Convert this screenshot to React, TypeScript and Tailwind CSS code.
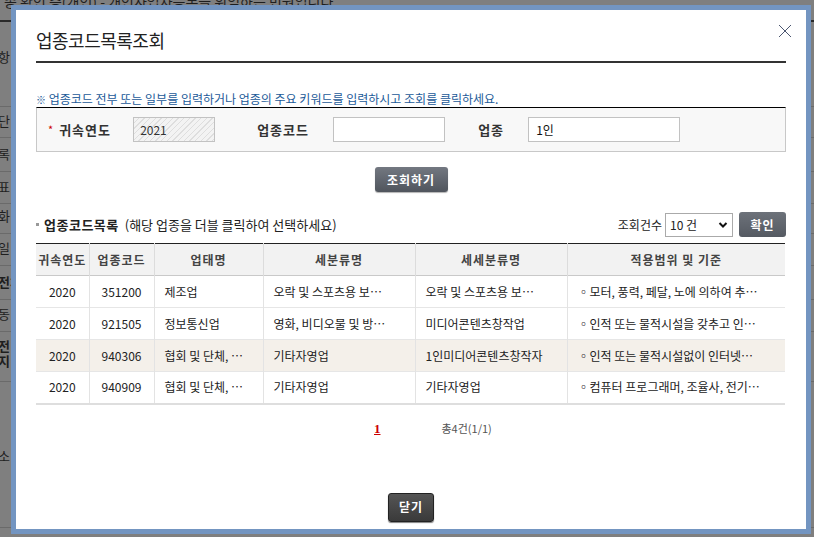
import React from "react";

const rows = [
  { year: "2020", code: "351200", biz: "제조업", sub: "오락 및 스포츠용 보…", subsub: "오락 및 스포츠용 보…", scope: "◦모터, 풍력, 페달, 노에 의하여 추…" },
  { year: "2020", code: "921505", biz: "정보통신업", sub: "영화, 비디오물 및 방…", subsub: "미디어콘텐츠창작업", scope: "◦인적 또는 물적시설을 갖추고 인…" },
  { year: "2020", code: "940306", biz: "협회 및 단체, …", sub: "기타자영업", subsub: "1인미디어콘텐츠창작자", scope: "◦인적 또는 물적시설없이 인터넷…", active: true },
  { year: "2020", code: "940909", biz: "협회 및 단체, …", sub: "기타자영업", subsub: "기타자영업", scope: "◦컴퓨터 프로그래머, 조율사, 전기…" },
];

const bgRows = [
  { h: "h-[76px]", t: "항", pt: "pt-[18px]" },
  { h: "h-[31px]", t: "단", pt: "pt-[6px]" },
  { h: "h-[34px]", t: "록", pt: "pt-[8px]" },
  { h: "h-[32px]", t: "표", pt: "pt-[7px]" },
  { h: "h-[30px]", t: "화", pt: "pt-[4px]" },
  { h: "h-[32px]", t: "일", pt: "pt-[6px]" },
  { h: "h-[34px]", t: "전체", pt: "pt-[8px]", bold: true },
  { h: "h-[32px]", t: "동", pt: "pt-[6px]" },
  { h: "h-[50px]", t: "전\n지", pt: "pt-[6px]", bold: true },
  { h: "h-[146px]", t: "소", pt: "pt-[66px]" },
];

function Btn({ children, className }: { children: React.ReactNode; className?: string }) {
  return (
    <button
      className={
        "flex items-center justify-center rounded-[3px] text-[12px] font-bold text-white tracking-[1px] " +
        (className ?? "")
      }
    >
      {children}
    </button>
  );
}

export default function App() {
  return (
    <div className="relative w-[814px] h-[537px] overflow-hidden bg-[#7f7f7f] font-['Noto_Sans_CJK_KR',sans-serif] text-[12px] text-[#333]">
      {/* dimmed page behind the dialog */}
      <div className="flex flex-col">
        <div className="h-[20px] -mt-[9px] pl-[4px] text-[14px] text-[#1e1e1e] whitespace-nowrap">
          종 확인 증(개인) - 개인사업자등록을 위임하는 민원입니다.
        </div>
        <div className="h-[11px] border-t-2 border-[#2a2a2a] mt-[9px]" />
        {bgRows.map((r, i) => (
          <div key={i} className={`${r.h} ${r.pt} border-b border-[#6a6a6a] -ml-[2px] text-[13px] leading-[15px] text-[#1e1e1e] whitespace-pre ${r.bold ? "font-bold" : ""}`}>
            {r.t}
          </div>
        ))}
      </div>

      {/* dialog */}
      <div className="absolute left-[11px] top-[5px] w-[800px] h-[529px] border-[5px] border-[#7395c1] bg-white">
        <div className="flex flex-col px-[20px] pt-[18px]">
          <div className="relative flex items-center h-[24px]">
            <h1 className="text-[18px] text-[#222] tracking-[-0.5px]">업종코드목록조회</h1>
            <svg className="absolute right-[-6px] top-[-4px]" width="14" height="14" viewBox="0 0 14 14">
              <path d="M1 1L13 13M13 1L1 13" stroke="#4b5670" strokeWidth="1" />
            </svg>
          </div>
          <div className="mt-[9px] h-[2px] bg-[#333]" />

          <p className="mt-[28px] text-[12px] leading-[15px] text-[#1b5a98] whitespace-nowrap">
            <span className="text-[10px]">※</span> 업종코드 전부 또는 일부를 입력하거나 업종의 주요 키워드를 입력하시고 조회를 클릭하세요.
          </p>

          <div className="flex items-center h-[45px] border border-[#c8c8c8] border-t-black bg-[#f8f8f8] pl-[11px]">
            <span className="text-[#c00] text-[11px] mr-[6px]">*</span>
            <span className="w-[74px] text-[13px] font-bold text-[#333] tracking-[1px]">귀속연도</span>
            <div className="w-[82px] h-[25px] border border-[#c2c2c2] flex items-center pl-[6px] text-[12px] text-[#333] bg-[repeating-linear-gradient(135deg,#f3f3f3_0px,#f3f3f3_3px,#dedede_3px,#dedede_4px)]">
              2021
            </div>
            <span className="ml-[42px] w-[76px] text-[13px] font-bold text-[#333] tracking-[1px]">업종코드</span>
            <div className="w-[112px] h-[25px] border border-[#c2c2c2] bg-white" />
            <span className="ml-[33px] w-[50px] text-[13px] font-bold text-[#333] tracking-[1px]">업종</span>
            <div className="w-[152px] h-[25px] border border-[#c2c2c2] bg-white flex items-center pl-[7px] text-[12px] text-[#111]">
              1인
            </div>
          </div>

          <div className="flex justify-center mt-[15px]">
            <Btn className="w-[73px] h-[25px] bg-gradient-to-b from-[#737881] to-[#50555d] shadow-[0_1px_1px_rgba(0,0,0,0.3)]">
              조회하기
            </Btn>
          </div>

          <div className="flex items-center justify-between mt-[20px] h-[25px]">
            <div className="flex items-center text-[13px] text-[#222] whitespace-nowrap">
              <span className="w-[3px] h-[3px] bg-[#999] mr-[5px]" />
              <span className="font-bold tracking-[0.5px]">업종코드목록</span>
              <span className="ml-[6px]">(해당 업종을 더블 클릭하여 선택하세요)</span>
            </div>
            <div className="flex items-center gap-[3px]">
              <span className="text-[12px] text-[#222]">조회건수</span>
              <div className="w-[68px] h-[24px] border border-[#aaa] bg-white flex items-center justify-between px-[4px] text-[12px] text-[#222]">
                <span>10 건</span>
                <svg width="10" height="8" viewBox="0 0 10 8">
                  <path d="M1.5 2L5 5.5L8.5 2" stroke="#111" strokeWidth="2" fill="none" />
                </svg>
              </div>
              <Btn className="ml-[3px] w-[47px] h-[25px] bg-gradient-to-b from-[#6d727a] to-[#555a62]">확인</Btn>
            </div>
          </div>

          <table className="mt-[6px] w-[749px] table-fixed border-collapse border-t border-t-[#222] border-b-2 border-b-[#dedede] text-[12px]">
            <colgroup>
              <col className="w-[53px]" />
              <col className="w-[65px]" />
              <col className="w-[109px]" />
              <col className="w-[152px]" />
              <col className="w-[152px]" />
              <col className="w-[218px]" />
            </colgroup>
            <thead>
              <tr className="h-[32px] bg-[#f2f2f2] border-b border-[#c9c9c9]">
                {["귀속연도", "업종코드", "업태명", "세분류명", "세세분류명", "적용범위 및 기준"].map((h, i) => (
                  <th key={h} className={`font-bold text-[#444] tracking-[1px] whitespace-nowrap ${i > 0 ? "border-l border-[#dcdcdc]" : ""}`}>
                    {h}
                  </th>
                ))}
              </tr>
            </thead>
            <tbody>
              {rows.map((r, i) => (
                <tr key={i} className={`h-[32px] ${i < rows.length - 1 ? "border-b border-[#e6e6e6]" : ""} ${r.active ? "bg-[#f4f0ea]" : "bg-white"} text-[#222]`}>
                  <td className="text-center">{r.year}</td>
                  <td className="text-center border-l border-[#e3e3e3]">{r.code}</td>
                  <td className="pl-[10px] border-l border-[#e3e3e3] whitespace-nowrap overflow-hidden">{r.biz}</td>
                  <td className="pl-[10px] border-l border-[#e3e3e3] whitespace-nowrap overflow-hidden">{r.sub}</td>
                  <td className="pl-[10px] border-l border-[#e3e3e3] whitespace-nowrap overflow-hidden">{r.subsub}</td>
                  <td className="pl-[10px] border-l border-[#e3e3e3] whitespace-nowrap overflow-hidden">{r.scope}</td>
                </tr>
              ))}
            </tbody>
          </table>

          <div className="flex items-center mt-[14px] h-[20px]">
            <span className="ml-[338px] font-['Liberation_Serif',serif] text-[13px] font-bold text-[#cc0000] underline">1</span>
            <span className="ml-[61px] text-[11px] text-[#555]">총4건(1/1)</span>
          </div>

          <div className="flex justify-center mt-[54px]">
            <Btn className="w-[46px] h-[29px] bg-gradient-to-b from-[#555] to-[#3a3a3a] border border-[#222] shadow-[0_1px_1px_rgba(0,0,0,0.5)]">
              닫기
            </Btn>
          </div>
        </div>
      </div>
    </div>
  );
}
